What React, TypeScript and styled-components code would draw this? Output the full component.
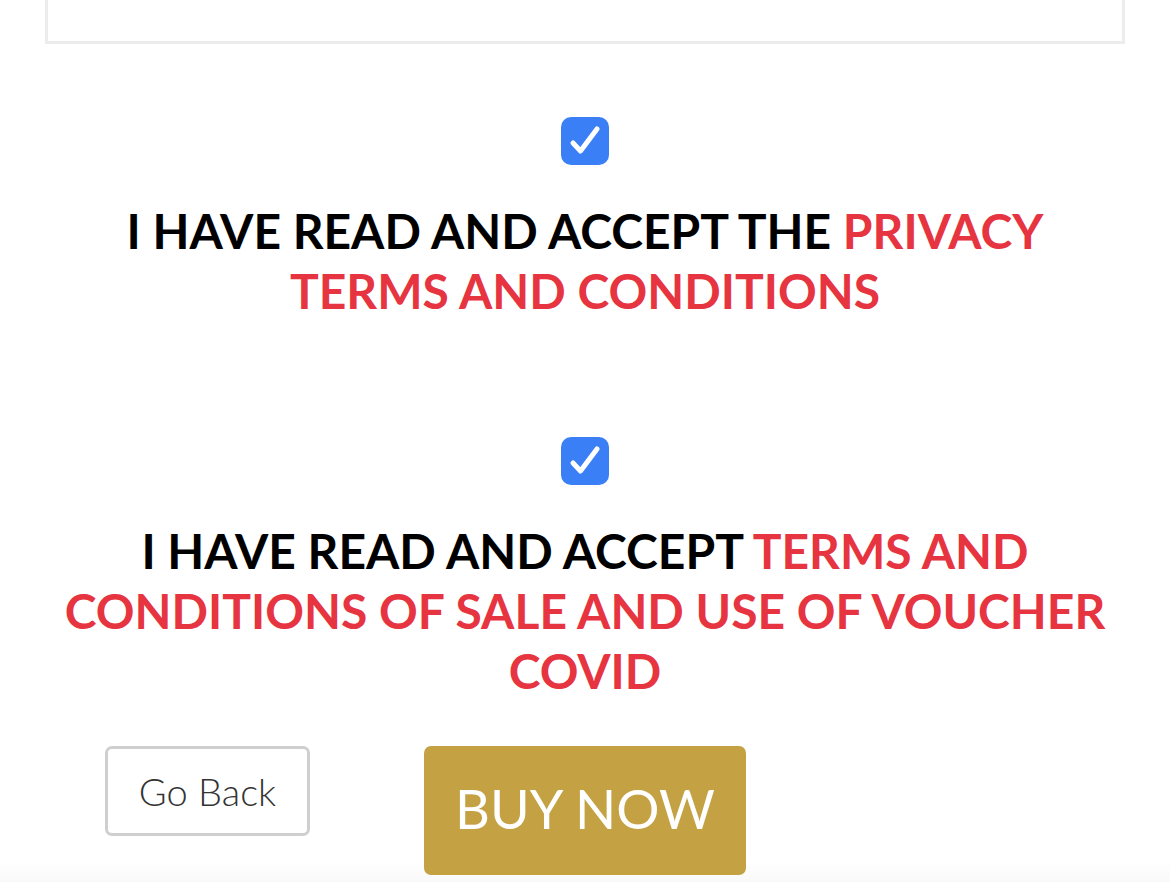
import styled, { createGlobalStyle } from "styled-components"

const Global = createGlobalStyle`
  html, body {
    margin: 0;
    padding: 0;
    background: #ffffff;
  }
  body {
    font-family: Lato, "Open Sans", sans-serif;
  }
`

const Page = styled.main`
  width: 1170px;
  height: 882px;
  overflow: hidden;
  background: linear-gradient(to bottom, #ffffff 0, #ffffff 862px, #f9f9f9 882px);
`

const TopPanel = styled.div`
  margin: 0 45px;
  height: 41px;
  border: 3px solid #ececec;
  border-top: none;
  background: #fff;
`

const Agreement = styled.section<{ $top: number }>`
  display: flex;
  flex-direction: column;
  align-items: center;
  margin-top: ${(p) => p.$top}px;
`

const Check = styled.div`
  width: 48px;
  height: 48px;
  border-radius: 10px;
  background: #3a7ff6;
  display: flex;
`

const Label = styled.p`
  margin: 36px 0 0;
  width: 1080px;
  text-align: center;
  font-family: Lato, sans-serif;
  font-weight: 700;
  font-size: 48px;
  line-height: 60px;
  color: #000;
  text-transform: uppercase;
`

const Red = styled.span`
  color: #e63440;
`

const Actions = styled.div`
  display: flex;
  align-items: flex-start;
  gap: 114px;
  padding-left: 105px;
  margin-top: 45px;
`

const GhostButton = styled.button`
  width: 205px;
  height: 90px;
  border: 3px solid #cfcfcf;
  border-radius: 7px;
  background: #fff;
  color: #333;
  font-family: Lato, sans-serif;
  font-weight: 300;
  font-size: 38px;
  padding: 0;
`

const BuyButton = styled.button`
  width: 322px;
  height: 129px;
  border: none;
  border-radius: 7px;
  background: #c4a244;
  color: #fff;
  font-family: Lato, sans-serif;
  font-weight: 400;
  font-size: 54px;
  padding: 0 0 4px;
`

function CheckIcon() {
  return (
    <Check>
      <svg width="48" height="48" viewBox="0 0 48 48">
        <path d="M12 26 L19.5 34 L36 12" fill="none" stroke="#fff" strokeWidth="5" strokeLinecap="round" strokeLinejoin="round" />
      </svg>
    </Check>
  )
}

export default function App() {
  return (
    <>
      <Global />
      <Page>
        <TopPanel />
        <Agreement $top={73}>
          <CheckIcon />
          <Label>
            I have read and accept the <Red>privacy terms and conditions</Red>
          </Label>
        </Agreement>
        <Agreement $top={116}>
          <CheckIcon />
          <Label>
            I have read and accept{" "}
            <Red>terms and conditions of sale and use of voucher covid</Red>
          </Label>
        </Agreement>
        <Actions>
          <GhostButton>Go Back</GhostButton>
          <BuyButton>BUY NOW</BuyButton>
        </Actions>
      </Page>
    </>
  )
}
